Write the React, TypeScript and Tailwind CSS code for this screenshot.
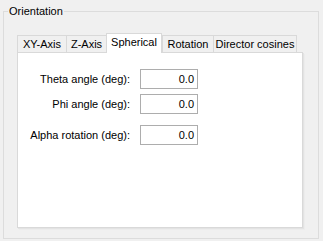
const tabs = [
  { label: "XY-Axis", w: "w-[49px]" },
  { label: "Z-Axis", w: "w-[40px]" },
  { label: "Spherical", w: "w-[56px]", active: true },
  { label: "Rotation", w: "w-[51px]" },
  { label: "Director cosines", w: "w-[84px]", last: true },
];

const fields = [
  { label: "Theta angle (deg):", value: "0.0", gap: "mt-[16px]" },
  { label: "Phi angle (deg):", value: "0.0", gap: "mt-[5px]" },
  { label: "Alpha rotation (deg):", value: "0.0", gap: "mt-[11px]" },
];

function App() {
  return (
    <div className="w-[323px] h-[241px] bg-[#f0f0f0] pt-[5px] px-[3px] font-['Liberation_Sans',Arial,sans-serif] text-[11px] leading-[13px] text-black overflow-hidden">
      <fieldset className="m-0 p-0 w-[316px] h-[234px] border border-[#dcdcdc] min-w-0">
        <legend className="ml-[4px] px-[1px] leading-[13px]">Orientation</legend>

        <div className="ml-[13px] mt-[15px] w-[286px]">
          {/* tab strip */}
          <div className="flex items-end h-[19px]">
            {tabs.map((t) =>
              t.active ? (
                <div
                  key={t.label}
                  className={`${t.w} h-[20px] -mb-px relative z-10 bg-white border-l border-t border-r border-[#d9d9d9] flex justify-center pt-[2px]`}
                >
                  {t.label}
                </div>
              ) : (
                <div
                  key={t.label}
                  className={`${t.w} h-[17px] bg-[#f0f0f0] border-t border-l border-[#d9d9d9] ${t.last ? "border-r" : ""} flex justify-center pt-[2px]`}
                >
                  {t.label}
                </div>
              )
            )}
          </div>

          {/* tab page */}
          <div className="h-[176px] w-[286px] bg-white border border-[#d9d9d9] shadow-[1px_1px_0_#e3e3e3,2px_2px_0_#ececec]">
            {fields.map((f) => (
              <div key={f.label} className={`flex items-center ${f.gap}`}>
                <span className="w-[112px] text-right">{f.label}</span>
                <div className="ml-[10px] w-[58px] h-[20px] border border-[#adadad] bg-white flex items-center justify-end pr-[3px]">
                  {f.value}
                </div>
              </div>
            ))}
          </div>
        </div>
      </fieldset>
    </div>
  );
}

export default App;
